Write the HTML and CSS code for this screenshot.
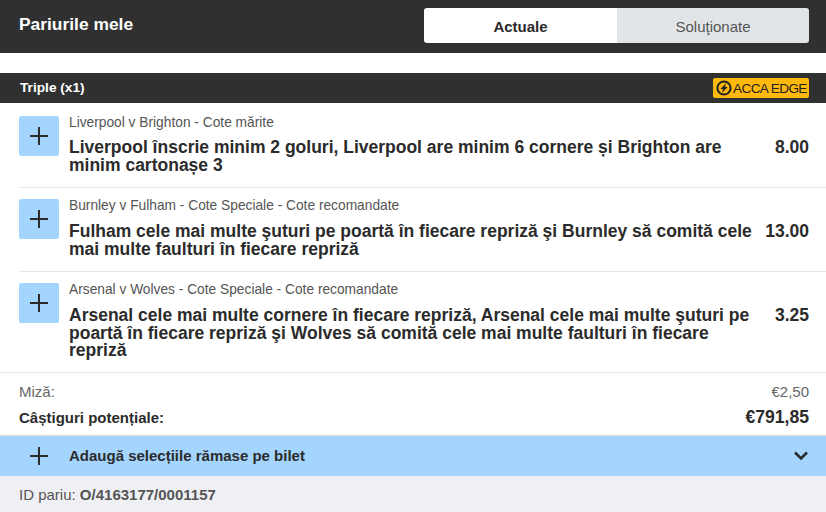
FILE: index.html
```html
<!DOCTYPE html>
<html>

<head>
    <title>Pariurile mele</title>
    <link rel="stylesheet" href="styles.css">
</head>

<body>
    <div class="top-bar">
        <h1>Pariurile mele</h1>
        <div class="tabs">
            <div class="tab tab-active">Actuale</div>
            <div class="tab">Soluţionate</div>
        </div>
    </div>

    <div class="bet-header">
        <span class="bet-type">Triple (x1)</span>
        <span class="acca-badge">
            <svg class="acca-icon" width="16" height="16" viewBox="0 0 16 16">
                <circle cx="8" cy="8" r="6.6" fill="none" stroke="#222" stroke-width="2"/>
                <path d="M10.2 3 L4.4 9.1 H7.1 L5.9 13 L11.7 6.9 H8.9 Z" fill="#222"/>
            </svg>
            <span class="acca-text">ACCA EDGE</span>
        </span>
    </div>

    <div class="selection selection-first">
        <div class="plus-box">
            <svg width="20" height="20" viewBox="0 0 20 20"><path d="M1 10 H19 M10 1 V19" stroke="#2b2b2b" stroke-width="2"/></svg>
        </div>
        <div class="selection-info">
            <div class="market">Liverpool v Brighton - Cote mărite</div>
            <div class="selection-row">
                <div class="selection-name">Liverpool înscrie minim 2 goluri, Liverpool are minim 6 cornere și Brighton are minim cartonașe 3</div>
                <div class="odds">8.00</div>
            </div>
        </div>
    </div>

    <div class="selection">
        <div class="plus-box">
            <svg width="20" height="20" viewBox="0 0 20 20"><path d="M1 10 H19 M10 1 V19" stroke="#2b2b2b" stroke-width="2"/></svg>
        </div>
        <div class="selection-info">
            <div class="market">Burnley v Fulham - Cote Speciale - Cote recomandate</div>
            <div class="selection-row">
                <div class="selection-name">Fulham cele mai multe şuturi pe poartă în fiecare repriză şi Burnley să comită cele mai multe faulturi în fiecare repriză</div>
                <div class="odds">13.00</div>
            </div>
        </div>
    </div>

    <div class="selection selection-last">
        <div class="plus-box">
            <svg width="20" height="20" viewBox="0 0 20 20"><path d="M1 10 H19 M10 1 V19" stroke="#2b2b2b" stroke-width="2"/></svg>
        </div>
        <div class="selection-info">
            <div class="market">Arsenal v Wolves - Cote Speciale - Cote recomandate</div>
            <div class="selection-row">
                <div class="selection-name">Arsenal cele mai multe cornere în fiecare repriză, Arsenal cele mai multe şuturi pe poartă în fiecare repriză şi Wolves să comită cele mai multe faulturi în fiecare repriză</div>
                <div class="odds">3.25</div>
            </div>
        </div>
    </div>

    <div class="totals">
        <div class="total-row stake">
            <span>Miză:</span>
            <span>€2,50</span>
        </div>
        <div class="total-row returns">
            <span class="returns-label">Câștiguri potențiale:</span>
            <span class="returns-value">€791,85</span>
        </div>
    </div>

    <div class="add-bar">
        <svg class="add-plus" width="20" height="20" viewBox="0 0 20 20"><path d="M1 10 H19 M10 1 V19" stroke="#2b2b2b" stroke-width="2"/></svg>
        <span class="add-text">Adaugă selecțiile rămase pe bilet</span>
        <svg class="chevron" width="16" height="12" viewBox="0 0 16 12"><path d="M2 2.5 L8 8.5 L14 2.5" fill="none" stroke="#2b2b2b" stroke-width="2.6"/></svg>
    </div>

    <div class="bet-id">ID pariu: <strong>O/4163177/0001157</strong></div>
</body>

</html>
```

FILE: styles.css
```css
body {
    margin: 0;
    font-family: 'Liberation Sans', Arial, sans-serif;
    background-color: #fff;
    color: #2b2b2b;
    overflow: hidden;
}

.top-bar {
    height: 53px;
    padding: 8px 17px 10px 19px;
    box-sizing: border-box;
    display: flex;
    justify-content: space-between;
    background-color: #303030;
}

.top-bar h1 {
    margin: 0;
    font-size: 17.4px;
    line-height: 35px;
    margin-top: -1px;
    color: #fff;
}

.tabs {
    width: 385px;
    display: flex;
    border-radius: 3px;
    overflow: hidden;
}

.tab {
    width: 192px;
    box-sizing: border-box;
    padding-top: 1px;
    background-color: #e2e5e8;
    color: #555;
    font-size: 15px;
    line-height: 35px;
    text-align: center;
}

.tab-active {
    width: 193px;
    background-color: #fff;
    color: #2b2b2b;
    font-weight: bold;
}

.bet-header {
    height: 30px;
    margin-top: 20px;
    padding: 0 17px 0 20px;
    display: flex;
    justify-content: space-between;
    align-items: center;
    background-color: #303030;
}

.bet-type {
    padding-bottom: 1px;
    font-size: 13.7px;
    font-weight: bold;
    color: #fff;
}

.acca-badge {
    height: 20px;
    width: 96px;
    box-sizing: border-box;
    padding-left: 3px;
    display: flex;
    align-items: center;
    gap: 1px;
    background-color: #ffb80c;
    border-radius: 2px;
}

.acca-icon {
    flex: none;
}

.acca-text {
    font-size: 13.5px;
    letter-spacing: -0.55px;
    color: #222;
    white-space: nowrap;
}

.selection {
    margin-left: 19px;
    padding: 9px 17px 12.8px 0;
    display: flex;
    gap: 10px;
    border-bottom: 1px solid #e6e6e6;
}

.selection-first {
    padding-top: 11px;
}

.selection-first .selection-row {
    margin-top: 7px;
}

.selection-last {
    margin-left: 0;
    padding-left: 19px;
    padding-bottom: 12.2px;
}

.plus-box {
    flex: none;
    width: 40px;
    height: 40px;
    margin-top: 2px;
    display: flex;
    align-items: center;
    justify-content: center;
    background-color: #a3d5ff;
    border-radius: 2px;
}

.selection-info {
    flex: 1;
}

.market {
    font-size: 13.75px;
    line-height: 18px;
    color: #555;
}

.selection-row {
    margin-top: 8px;
    display: flex;
    justify-content: space-between;
}

.selection-name {
    flex: none;
    width: 686px;
    font-size: 17.5px;
    font-weight: bold;
    line-height: 17.6px;
}

.odds {
    font-size: 17.5px;
    font-weight: bold;
    line-height: 17.6px;
    white-space: nowrap;
}

.totals {
    padding: 9px 17px 0 19px;
    height: 63px;
    box-sizing: border-box;
}

.total-row {
    display: flex;
    justify-content: space-between;
    align-items: center;
}

.stake {
    height: 20px;
    font-size: 15px;
    color: #666;
}

.returns {
    height: 25px;
    margin-top: 3px;
}

.returns-label {
    font-size: 15px;
    font-weight: bold;
}

.returns-value {
    font-size: 17.6px;
    font-weight: bold;
}

.add-bar {
    height: 40px;
    padding: 0 17px 0 29px;
    display: flex;
    align-items: center;
    background-color: #a3d5ff;
    box-shadow: 0 -1px 1px rgba(0, 0, 0, 0.12);
}

.add-text {
    flex: 1;
    margin-left: 20px;
    font-size: 15px;
    font-weight: bold;
}

.bet-id {
    height: 36px;
    padding-left: 19px;
    font-size: 15px;
    line-height: 37px;
    color: #555;
    background-color: #eff0f4;
}
```
